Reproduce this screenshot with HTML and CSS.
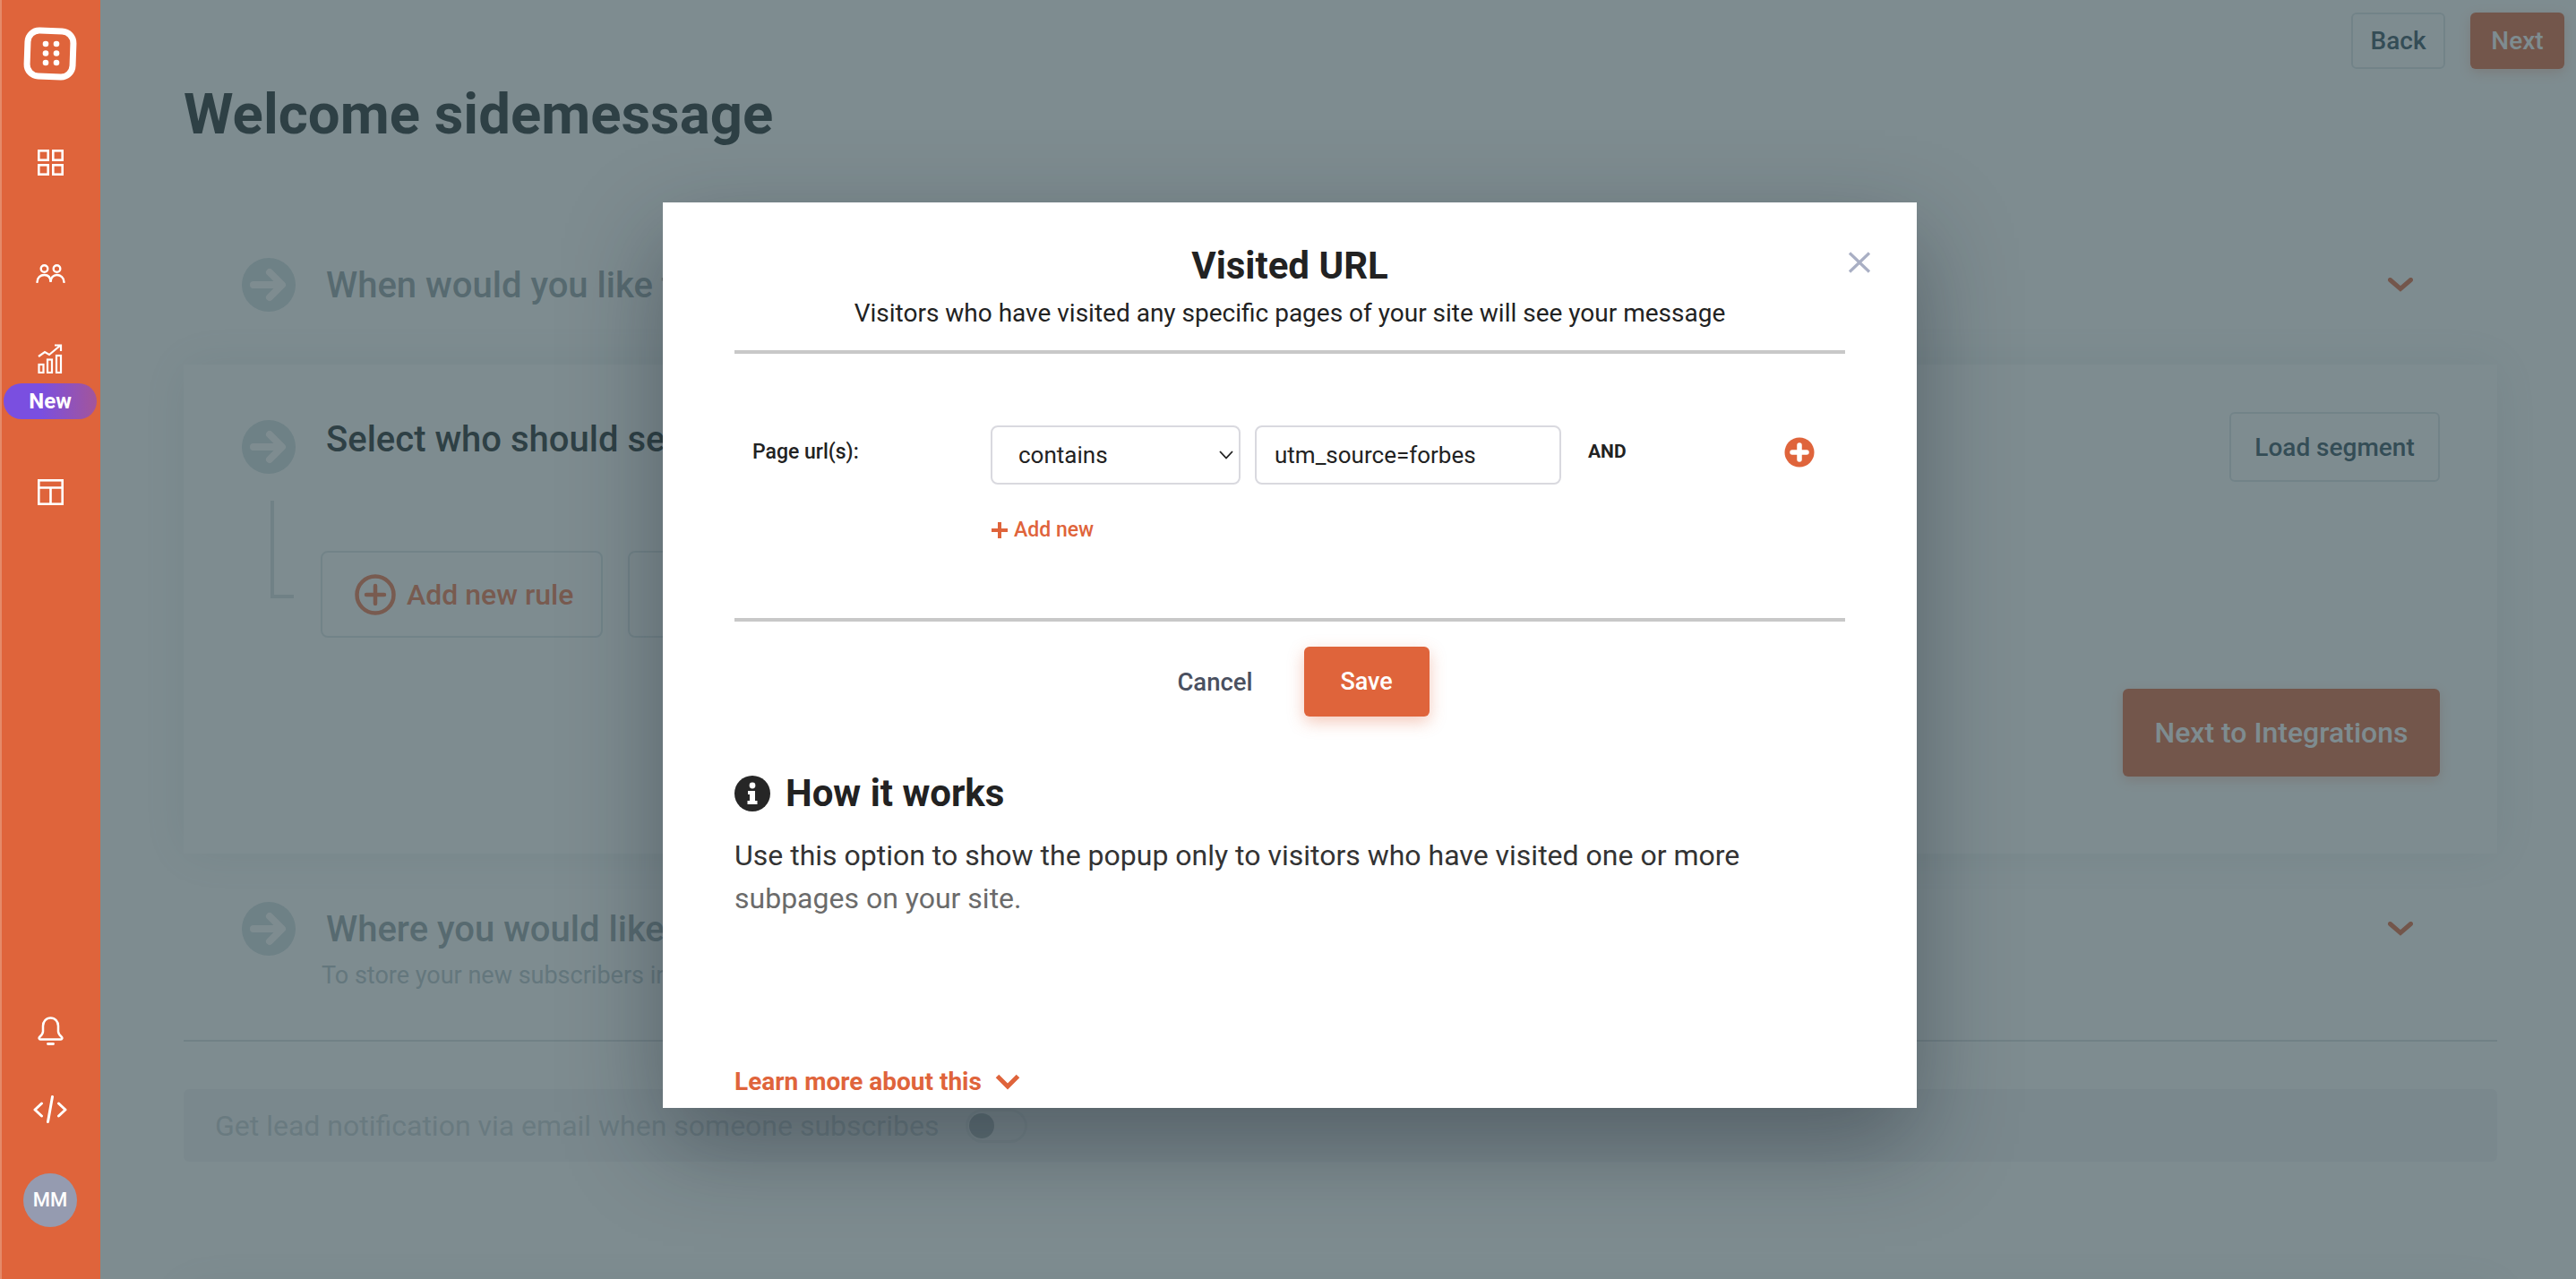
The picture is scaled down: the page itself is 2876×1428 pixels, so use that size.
FILE: index.html
```html
<!DOCTYPE html>
<html lang="en">
<head>
    <meta charset="UTF-8">
    <title>Welcome sidemessage</title>
    <link rel="stylesheet" href="styles.css">
</head>
<body>
    <div class="app">
        <aside class="sidebar">
            <svg class="logo" width="60" height="60" viewBox="0 0 60 60">
                <rect x="4.5" y="4.5" width="51" height="51" rx="13" fill="none" stroke="#fff" stroke-width="7" transform="rotate(2 30 30)"/>
                <circle cx="25" cy="19" r="3.3" fill="#fff"/><circle cx="37" cy="19" r="3.3" fill="#fff"/>
                <circle cx="25" cy="29.500" r="3.3" fill="#fff"/><circle cx="37" cy="29.500" r="3.3" fill="#fff"/>
                <circle cx="25" cy="40" r="3.3" fill="#fff"/><circle cx="37" cy="40" r="3.3" fill="#fff"/>
            </svg>
            <svg class="nav-grid" width="29" height="29" viewBox="0 0 29 29" fill="none" stroke="#fff" stroke-width="2.6">
                <rect x="1.3" y="1.3" width="10.4" height="10.4"/><rect x="17.3" y="1.3" width="10.4" height="10.4"/>
                <rect x="1.3" y="17.3" width="10.4" height="10.4"/><rect x="17.3" y="17.3" width="10.4" height="10.4"/>
            </svg>
            <svg class="nav-people" width="33" height="21" viewBox="0 0 33 21" fill="none" stroke="#fff" stroke-width="2.4" stroke-linecap="round">
                <circle cx="9.5" cy="5" r="3.8"/><circle cx="23.5" cy="5" r="3.8"/>
                <path d="M1.5 20c0-5 3.5-8 8-8s7 3 7 8c0-5 3-8 7-8s8 3 8 8"/>
            </svg>
            <svg class="nav-chart" width="28" height="33" viewBox="0 0 28 33" fill="none" stroke="#fff" stroke-width="2.2">
                <rect x="1.5" y="23" width="5" height="9"/><rect x="11" y="17.5" width="5" height="14.500"/><rect x="21" y="13" width="5" height="19"/>
                <path d="M1 14l7-5 5 3 12-10M19 1.500h7v6.500"/>
            </svg>
            <span class="new-pill">New</span>
            <svg class="nav-layout" width="29" height="29" viewBox="0 0 29 29" fill="none" stroke="#fff" stroke-width="2.6">
                <rect x="1.300" y="1.300" width="26.400" height="26.400"/><path d="M1.300 9.500h26.400M14.500 9.500v18.200"/>
            </svg>
            <div class="sidebar-bottom">
                <svg width="29" height="32" viewBox="0 0 29 32" fill="none" stroke="#fff" stroke-width="2.500" stroke-linejoin="round" stroke-linecap="round">
                    <path d="M14.500 1.500c-5 0-8.500 4-8.500 9v6c0 3-2 4.500-4 6.500-.8 1-.3 2.500 1 2.500h23c1.300 0 1.800-1.500 1-2.500-2-2-4-3.500-4-6.500v-6c0-5-3.500-9-8.500-9z"/>
                    <path d="M11.500 30.500h6" stroke-width="2.800"/>
                </svg>
                <svg class="nav-code" width="38" height="31" viewBox="0 0 38 31" fill="none" stroke="#fff" stroke-width="3" stroke-linecap="round" stroke-linejoin="round">
                    <path d="M9.500 9L2 16l7.500 7M28.500 9L36 16l-7.500 7M21.500 1.500L16.500 29.500"/>
                </svg>
                <div class="avatar">MM</div>
            </div>
        </aside>

        <main class="main">
            <div class="topbar">
                <a class="btn btn-ghost btn-top">Back</a>
                <a class="btn btn-solid btn-top">Next</a>
            </div>
            <h1>Welcome sidemessage</h1>

            <section class="step step-first">
                <svg class="step-arrow" width="60" height="60" viewBox="0 0 60 60"><circle cx="30" cy="30" r="30" fill="#d0dee1"/><path d="M13 30h30M31 16l14 14-14 14" fill="none" stroke="#fff" stroke-width="8" stroke-linecap="round" stroke-linejoin="round"/></svg>
                <h2 class="step-title">When would you like to</h2>
                <svg class="chevron" width="28" height="17" viewBox="0 0 28 17"><path d="M2.500 2.500L14 12.500 25.500 2.500" fill="none" stroke="#df643b" stroke-width="5" stroke-linecap="round"/></svg>
            </section>

            <section class="panel">
                <div class="panel-head">
                    <svg class="step-arrow" width="60" height="60" viewBox="0 0 60 60"><circle cx="30" cy="30" r="30" fill="#d0dee1"/><path d="M13 30h30M31 16l14 14-14 14" fill="none" stroke="#fff" stroke-width="8" stroke-linecap="round" stroke-linejoin="round"/></svg>
                    <h2 class="step-title step-title-active">Select who should see</h2>
                    <a class="btn btn-ghost btn-load">Load segment</a>
                </div>
                <div class="rules">
                    <div class="rule-line"></div>
                    <a class="rule-btn">
                        <svg width="46" height="46" viewBox="0 0 46 46" fill="none" stroke="#ee7248" stroke-width="4.500" stroke-linecap="round"><circle cx="23" cy="23" r="20.500"/><path d="M23 13v20M13 23h20"/></svg>
                        Add new rule
                    </a>
                    <a class="rule-btn rule-btn-second">Saved</a>
                </div>
                <div class="panel-foot">
                    <a class="btn btn-solid btn-next">Next to Integrations</a>
                </div>
            </section>

            <section class="step step-third">
                <svg class="step-arrow" width="60" height="60" viewBox="0 0 60 60"><circle cx="30" cy="30" r="30" fill="#d0dee1"/><path d="M13 30h30M31 16l14 14-14 14" fill="none" stroke="#fff" stroke-width="8" stroke-linecap="round" stroke-linejoin="round"/></svg>
                <h2 class="step-title">Where you would like to</h2>
                <svg class="chevron" width="28" height="17" viewBox="0 0 28 17"><path d="M2.500 2.500L14 12.500 25.500 2.500" fill="none" stroke="#df643b" stroke-width="5" stroke-linecap="round"/></svg>
            </section>
            <p class="step-sub">To store your new subscribers in</p>
            <hr class="page-rule">
            <div class="notify">
                <span>Get lead notification via email when someone subscribes</span>
                <span class="toggle"><i></i></span>
            </div>
            <div class="panel-next"></div>

            <div class="overlay"></div>
        </main>

        <div class="modal">
            <svg class="modal-close" width="26" height="24" viewBox="0 0 26 24"><path d="M2 1.500L24 22.500M24 1.500L2 22.500" stroke="#a9afc4" stroke-width="3.200"/></svg>
            <h3 class="modal-title">Visited URL</h3>
            <p class="modal-sub">Visitors who have visited any specific pages of your site will see your message</p>
            <div class="modal-form">
                <div class="form-row">
                    <label class="form-label">Page url(s):</label>
                    <div class="select-wrap">
                        <select class="form-select"><option>contains</option></select>
                        <svg class="select-arrow" width="16" height="10" viewBox="0 0 16 10"><path d="M1 1l7 7.500L15 1" fill="none" stroke="#222" stroke-width="1.800"/></svg>
                    </div>
                    <input class="form-input" type="text" value="utm_source=forbes">
                    <span class="form-and">AND</span>
                    <svg class="form-add" width="34" height="34" viewBox="0 0 34 34"><circle cx="17" cy="17" r="16.500" fill="#df643b"/><path d="M17 9v16M9 17h16" stroke="#fff" stroke-width="5.500" stroke-linecap="round"/></svg>
                </div>
                <a class="add-new">
                    <svg width="20" height="20" viewBox="0 0 20 20"><path d="M10 1v18M1 10h18" stroke="#df643b" stroke-width="4"/></svg>
                    Add new
                </a>
            </div>
            <div class="modal-actions">
                <a class="cancel">Cancel</a>
                <a class="save">Save</a>
            </div>
            <h4 class="how-title">
                <svg width="40" height="40" viewBox="0 0 40 40"><circle cx="20" cy="20" r="20" fill="#262626"/><circle cx="20" cy="11" r="3.400" fill="#fff"/><path d="M15 17h8v11h2.500v4h-11v-4H17v-7h-2z" fill="#fff"/></svg>
                How it works
            </h4>
            <p class="how-text">
                <span>Use this option to show the popup only to visitors who have visited one or more</span>
                <span class="how-fade">subpages on your site.</span>
            </p>
            <a class="learn-more">
                Learn more about this
                <svg width="28" height="18" viewBox="0 0 28 18"><path d="M2.500 2.500L14 14 25.500 2.500" fill="none" stroke="#df643b" stroke-width="5"/></svg>
            </a>
        </div>
    </div>
</body>
</html>
```

FILE: styles.css
```css
* {
    box-sizing: border-box;
}
html, body {
    margin: 0;
    height: 100%;
    overflow: hidden;
}
body {
    font-family: Roboto, "Liberation Sans", sans-serif;
    color: #1c2528;
    background-color: #fff;
}
a {
    text-decoration: none;
}
.app {
    position: relative;
    display: flex;
    height: 1428px;
}

/* sidebar */
.sidebar {
    width: 112px;
    flex-shrink: 0;
    display: flex;
    flex-direction: column;
    align-items: center;
    background-color: #df643b;
    border-left: 2px solid #e58a69;
    padding-right: 2px;
}
.logo {
    margin-top: 30px;
}
.nav-grid {
    margin-top: 77px;
}
.nav-people {
    margin-top: 99px;
}
.nav-chart {
    margin-top: 68px;
}
.new-pill {
    width: 104px;
    height: 40px;
    margin-top: 11px;
    border-radius: 20px;
    background: linear-gradient(90deg, #7a4fe0 40%, #a3559a);
    color: #fff;
    font-size: 24px;
    font-weight: 700;
    line-height: 40px;
    text-align: center;
}
.nav-layout {
    margin-top: 67px;
}
.sidebar-bottom {
    margin-top: auto;
    padding-bottom: 58px;
    display: flex;
    flex-direction: column;
    align-items: center;
}
.nav-code {
    margin-top: 56px;
}
.avatar {
    width: 60px;
    height: 60px;
    margin-top: 56px;
    border-radius: 50%;
    background-color: #959bb0;
    color: #fff;
    font-size: 22px;
    font-weight: 500;
    line-height: 60px;
    text-align: center;
}

/* page behind the dialog */
.main {
    position: relative;
    flex: 1;
    min-width: 0;
    padding: 0 88px 0 93px;
    overflow: hidden;
}
.topbar {
    display: flex;
    justify-content: flex-end;
    gap: 28px;
    height: 77px;
    padding-top: 14px;
    margin-right: -75px;
}
.btn {
    display: flex;
    align-items: center;
    justify-content: center;
    border-radius: 6px;
    font-weight: 500;
}
.btn-ghost {
    border: 2px solid #dde5e8;
    color: #2c4a5a;
}
.btn-solid {
    background-color: #df643b;
    color: #fff;
    box-shadow: 0 4px 14px rgba(223, 100, 59, 0.3);
}
.btn-top {
    width: 105px;
    height: 63px;
    font-size: 28px;
}
h1 {
    margin: 15px 0 0;
    font-size: 63.500px;
    line-height: 72px;
    font-weight: 700;
}
.step {
    display: flex;
    align-items: center;
    gap: 34px;
    height: 60px;
    padding: 0 94px 0 65px;
}
.step-first {
    margin-top: 124px;
}
.step-third {
    margin-top: 54px;
}
.step-title {
    margin: 0;
    font-size: 40px;
    font-weight: 500;
    white-space: nowrap;
    color: #8f9da3;
}
.step-title-active {
    margin-bottom: 18px;
    color: #1c2528;
}
.chevron {
    margin-left: auto;
}
.panel {
    margin-top: 59px;
    height: 546px;
    padding: 53px 64px 0 65px;
    box-shadow: 0 0 50px rgba(50, 90, 100, 0.12);
}
.panel-head {
    display: flex;
    align-items: center;
    gap: 34px;
}
.btn-load {
    margin-left: auto;
    width: 235px;
    height: 78px;
    font-size: 28px;
}
.rules {
    display: flex;
    margin-top: 21px;
    padding-left: 32px;
}
.rule-line {
    width: 26px;
    height: 109px;
    border-left: 4px solid #d6e0e3;
    border-bottom: 4px solid #d6e0e3;
    margin-right: 30px;
}
.rule-btn {
    display: flex;
    align-items: center;
    gap: 12px;
    width: 315px;
    height: 97px;
    margin-top: 56px;
    margin-right: 28px;
    padding-left: 36px;
    border: 2px solid #dde5e8;
    border-radius: 8px;
    color: #ee7248;
    font-size: 32px;
    font-weight: 500;
    white-space: nowrap;
}
.rule-btn-second {
    width: 160px;
    margin-right: 0;
    color: #2c4a5a;
}
.panel-foot {
    display: flex;
    justify-content: flex-end;
    margin-top: 57px;
}
.btn-next {
    width: 354px;
    height: 98px;
    font-size: 32px;
}
.step-sub {
    margin: 7px 0 0;
    padding-left: 154px;
    font-size: 27px;
    line-height: 30px;
    white-space: nowrap;
    color: #b4c2c8;
}
.page-rule {
    margin: 57px 0 0;
    border: 0;
    border-top: 2px solid #d9dfe1;
}
.notify {
    display: flex;
    align-items: center;
    gap: 30px;
    height: 81px;
    margin-top: 53px;
    padding-left: 35px;
    border-radius: 6px;
    background-color: #f4f4f6;
    font-size: 32px;
    color: #c4ccd0;
}
.toggle {
    width: 69px;
    height: 38px;
    padding: 2px 1px;
    border: 3px solid #e6e9ec;
    border-radius: 19px;
}
.toggle i {
    display: block;
    width: 28px;
    height: 28px;
    border-radius: 50%;
    background-color: #aab2b8;
}
.panel-next {
    height: 200px;
    margin-top: 143px;
    box-shadow: 0 0 50px rgba(50, 90, 100, 0.12);
}
.overlay {
    position: absolute;
    top: 0;
    right: 0;
    bottom: 0;
    left: 0;
    background-color: rgba(57, 78, 84, 0.65);
}

/* dialog */
.modal {
    position: absolute;
    top: 226px;
    left: 740px;
    width: 1400px;
    height: 1011px;
    padding: 0 80px;
    background-color: #fff;
    box-shadow: 0 40px 100px rgba(20, 30, 40, 0.38);
}
.modal-close {
    position: absolute;
    top: 55px;
    right: 51px;
}
.modal-title {
    margin: 46px 0 0;
    font-size: 42px;
    line-height: 50px;
    font-weight: 700;
    text-align: center;
    color: #222;
}
.modal-sub {
    margin: 10px 0 0;
    font-size: 28px;
    line-height: 36px;
    text-align: center;
    color: #222;
}
.modal-form {
    height: 303px;
    margin-top: 23px;
    border-top: 4px solid #c8c8c8;
    border-bottom: 4px solid #c8c8c8;
}
.form-row {
    display: flex;
    align-items: flex-start;
    margin-top: 80px;
    padding-left: 20px;
}
.form-label {
    width: 266px;
    margin-top: 15px;
    font-size: 23px;
    line-height: 30px;
    font-weight: 500;
    color: #222;
}
.select-wrap {
    position: relative;
    width: 279px;
}
.select-arrow {
    position: absolute;
    top: 28px;
    right: 8px;
}
.form-select, .form-input {
    height: 66px;
    border: 2px solid #d9d9df;
    border-radius: 8px;
    background-color: #fff;
    font-family: Roboto, "Liberation Sans", sans-serif;
    font-size: 26px;
    color: #222;
}
.form-select {
    width: 100%;
    padding-left: 29px;
    appearance: none;
}
.form-input {
    width: 342px;
    margin-left: 16px;
    padding: 0 20px;
}
.form-and {
    width: 219px;
    margin-left: 30px;
    margin-top: 14px;
    font-size: 21px;
    line-height: 30px;
    font-weight: 700;
    color: #222;
}
.form-add {
    margin-top: 13px;
}
.add-new {
    display: flex;
    align-items: center;
    gap: 6px;
    margin: 36px 0 0 286px;
    font-size: 23px;
    line-height: 30px;
    font-weight: 500;
    color: #df643b;
}
.modal-actions {
    display: flex;
    justify-content: center;
    align-items: center;
    gap: 57px;
    margin-top: 28px;
    padding-left: 30px;
}
.cancel {
    font-size: 27.500px;
    font-weight: 500;
    color: #4a5060;
}
.save {
    width: 140px;
    height: 78px;
    border-radius: 6px;
    background-color: #df643b;
    color: #fff;
    font-size: 27px;
    font-weight: 500;
    line-height: 78px;
    text-align: center;
    box-shadow: 0 6px 18px rgba(223, 100, 59, 0.35);
}
.how-title {
    display: flex;
    align-items: center;
    gap: 17px;
    margin: 66px 0 0;
    font-size: 42px;
    line-height: 40px;
    font-weight: 700;
    color: #222;
}
.how-text {
    margin: 25px 0 0;
    font-size: 32px;
    line-height: 48px;
    color: #333;
}
.how-text span {
    display: block;
}
.how-fade {
    color: #6b6b6b;
}
.learn-more {
    position: absolute;
    left: 80px;
    bottom: 12px;
    display: flex;
    align-items: center;
    gap: 15px;
    font-size: 28px;
    line-height: 34px;
    font-weight: 700;
    color: #df643b;
}
```
